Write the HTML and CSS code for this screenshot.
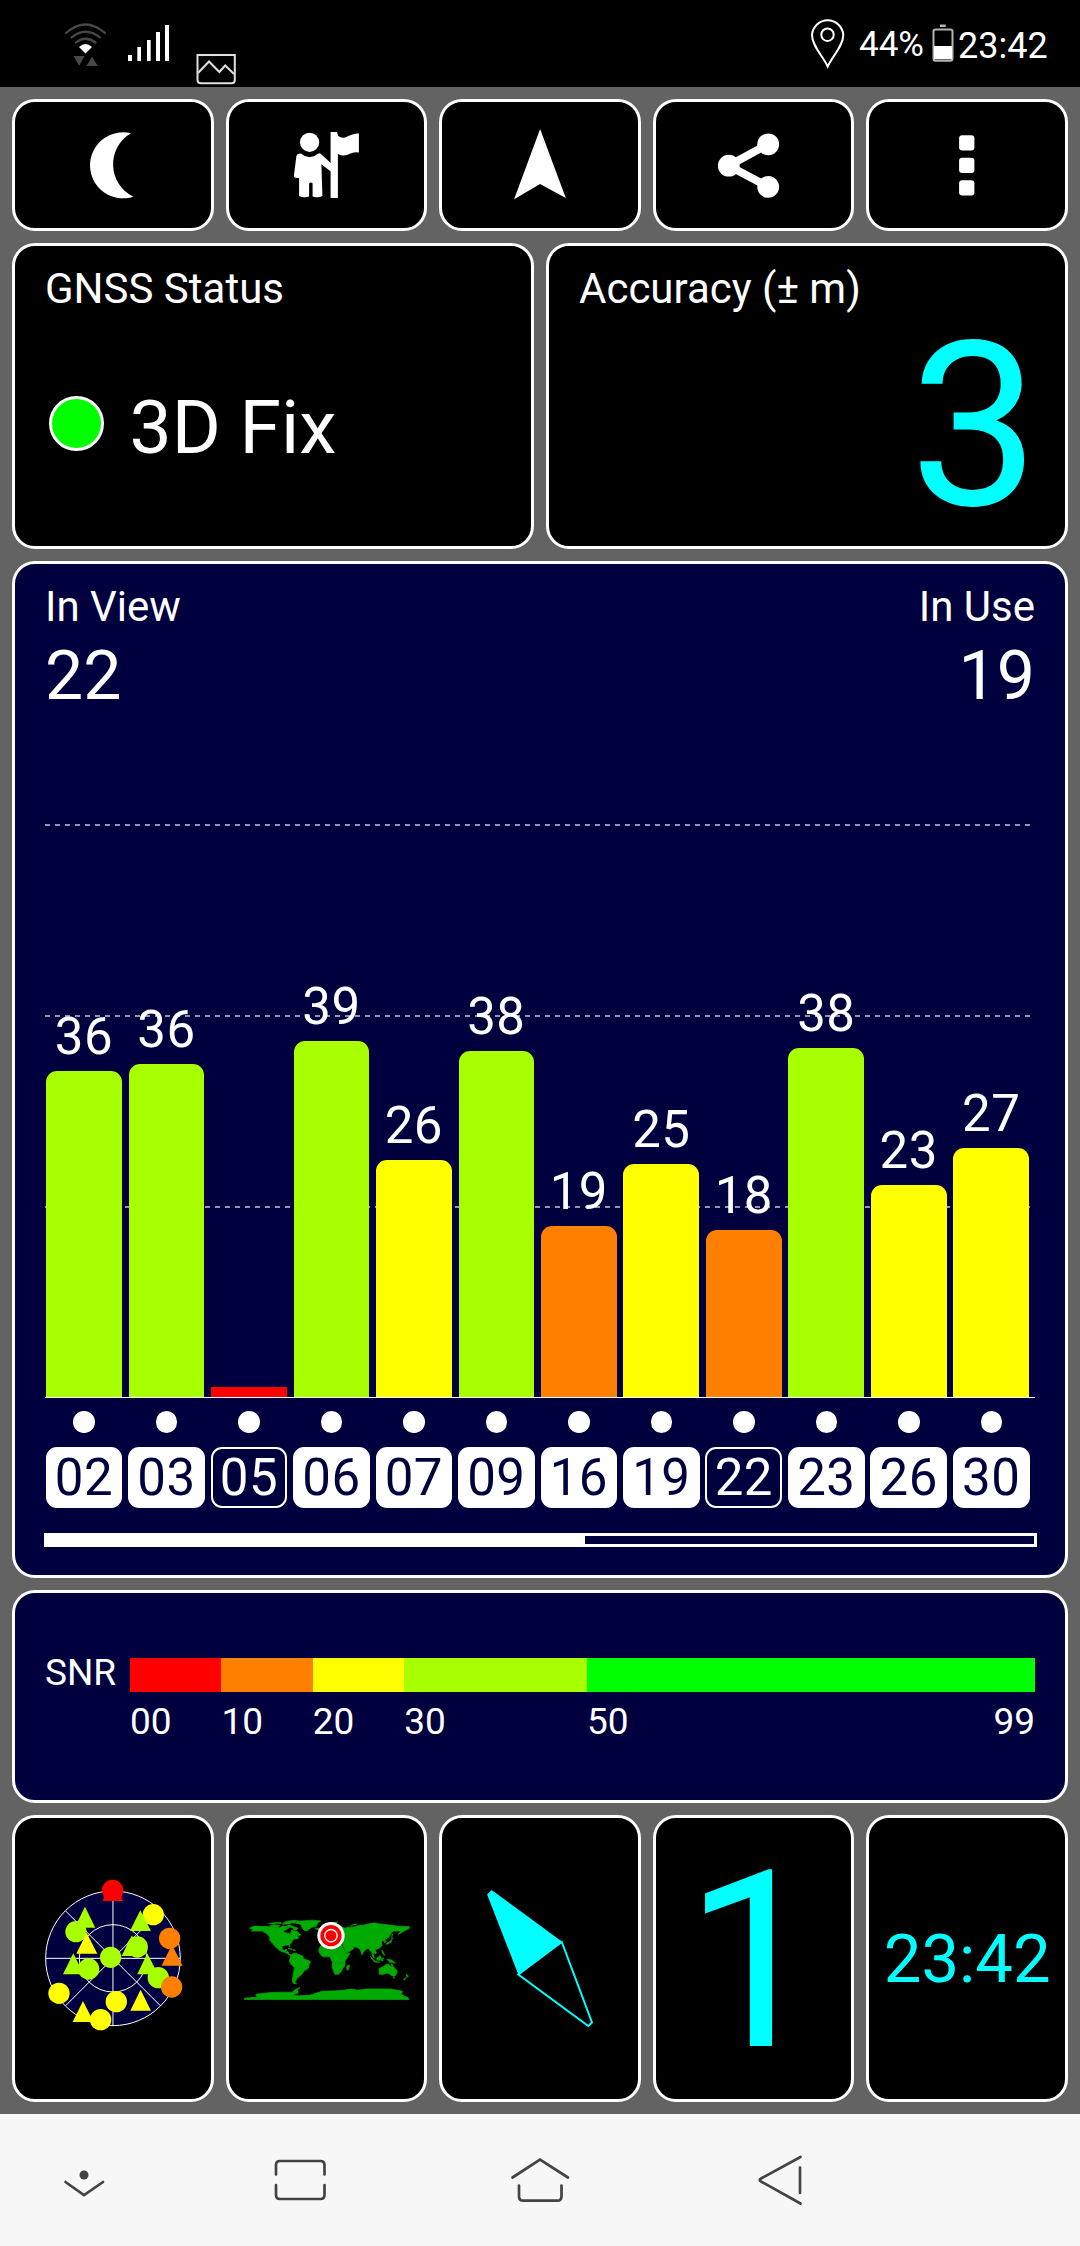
FILE: index.html
```html
<!doctype html>
<html lang="en">
<head>
<title>GPS Test</title>
<meta charset="utf-8">
<meta name="viewport" content="width=device-width">
<link rel="stylesheet" href="styles.css">
</head>
<body>
<div class="status">
	<svg class="wifi" viewBox="60 0 50 87">
		<g fill="none" stroke="#484848" stroke-width="2.2" stroke-linecap="round">
			<path d="M66 33Q85.5 16 105 33"/>
			<path d="M71.5 37.5Q85.5 26 100 37.5"/>
			<path d="M76 42.5Q85.5 35 95.5 42.5"/>
		</g>
		<path d="M79 47Q85.500 41 92 47L85.500 53.500z" fill="#fff"/>
		<path d="M73.500 56H84.500L79.200 65.700zM86.500 66H97.800L92 56.700z" fill="#484848"/>
	</svg>
	<svg class="signal" viewBox="125 0 50 87" fill="#fff">
		<path d="M128 55h4v6h-4zM137.300 47h3.700v14h-3.700zM147 40h3.700v21h-3.700zM156 32h4v29h-4zM165 25h4v36h-4z"/>
	</svg>
	<svg class="picture" viewBox="190 0 50 87" fill="none" stroke="#e0e0e0" stroke-width="2">
		<path d="M197.500 55H234.800V80Q234.800 83.200 231.500 83.200H201Q197.500 83.200 197.500 80z"/>
		<path d="M198 73L209 61.500L219.400 72L225.200 65.500L234 74"/>
	</svg>
	<svg class="pin" viewBox="805 0 45 87" fill="none" stroke="#fff" stroke-width="2">
		<path d="M827.700 66.500C823 56 812 46 812 35A15.700 16 0 0 1 843.300 35C843.300 46 832.500 56 827.700 66.500z"/>
		<circle cx="827.500" cy="34.700" r="6.200"/>
	</svg>
	<span class="percent">44%</span>
	<svg class="battery" viewBox="930 0 26 87">
		<rect x="933.500" y="29.500" width="19" height="31.200" rx="2" fill="none" stroke="#b4b4b4" stroke-width="2"/>
		<path d="M940 24.500h5.700v2.500h-5.700z" fill="#b4b4b4"/>
		<path d="M934 46h18v13.300h-18z" fill="#fff"/>
	</svg>
	<span class="clock">23:42</span>
</div>

<div class="app">
	<div class="row buttons">
		<div class="tile">
			<svg viewBox="15 102 195.6 126" fill="#fff"><path d="M130.900 133.300A33 33 0 1 0 133.300 196.700A36 36 0 0 1 130.900 133.300z"/></svg>
		</div>
		<div class="tile">
			<svg viewBox="228.6 102 195.6 126" fill="#fff">
				<circle cx="309.200" cy="142.300" r="9.600"/>
				<path d="M301 153.700Q309 161 317.500 153.700Q319.500 152.500 321 154.500L330.700 163.300V171.700L321 164.300L322 196Q317 198.200 312.200 196.500V183.500Q310.500 181.500 308.700 183.500V196.500Q303 198.200 298.700 196V178Q294 178 293.400 176.500L296 156Q297 152.500 301 153.700z"/>
				<path d="M330.200 132h6.500l1 4q3.500 2.500 7 1.500q9-4.500 13.800-4v19q-5-1-9 1.200q-6 3.500-12 .3v44h-7.300z"/>
			</svg>
		</div>
		<div class="tile">
			<svg viewBox="442.2 102 195.6 126" fill="#fff"><path d="M540.300 129L566 198L540.300 184L514.300 199.300z"/></svg>
		</div>
		<div class="tile">
			<svg viewBox="655.8 102 195.6 126" fill="#fff">
				<path d="M768 144.300L728.400 165.700L768 186.700" fill="none" stroke="#fff" stroke-width="8"/>
				<circle cx="728.600" cy="165.700" r="10.900"/>
				<circle cx="768" cy="144.300" r="10.900"/>
				<circle cx="768" cy="186.900" r="10.900"/>
			</svg>
		</div>
		<div class="tile">
			<svg viewBox="869.4 102 195.6 126" fill="#fff">
				<rect x="959.500" y="135.300" width="15.300" height="15.300" rx="3"/>
				<rect x="959.500" y="157.800" width="15.300" height="15.300" rx="3"/>
				<rect x="959.500" y="180.200" width="15.300" height="15.300" rx="3"/>
			</svg>
		</div>
	</div>

	<div class="row fix">
		<div class="tile padded">
			<div class="label">GNSS Status</div>
			<div class="fixline"><i class="led"></i>3D Fix</div>
		</div>
		<div class="tile padded">
			<div class="label">Accuracy (± m)</div>
			<div class="accuracy">3</div>
		</div>
	</div>

	<div class="tile padded navy chart">
		<div class="counts">
			<div><div class="label">In View</div><div class="count">22</div></div>
			<div class="right"><div class="label">In Use</div><div class="count">19</div></div>
		</div>
		<div class="plot">
			<i class="line" style="bottom:571px"></i>
			<i class="line" style="bottom:380px"></i>
			<i class="line" style="bottom:189px"></i>
			<div class="sat"><b>36</b><i class="bar lime" style="height:326px"></i></div>
			<div class="sat"><b>36</b><i class="bar lime" style="height:333px"></i></div>
			<div class="sat"><i class="bar red" style="height:10.500px"></i></div>
			<div class="sat"><b>39</b><i class="bar lime" style="height:356px"></i></div>
			<div class="sat"><b>26</b><i class="bar yellow" style="height:237px"></i></div>
			<div class="sat"><b>38</b><i class="bar lime" style="height:346px"></i></div>
			<div class="sat"><b>19</b><i class="bar orange" style="height:171px"></i></div>
			<div class="sat"><b>25</b><i class="bar yellow" style="height:233px"></i></div>
			<div class="sat"><b>18</b><i class="bar orange" style="height:167px"></i></div>
			<div class="sat"><b>38</b><i class="bar lime" style="height:349px"></i></div>
			<div class="sat"><b>23</b><i class="bar yellow" style="height:212px"></i></div>
			<div class="sat"><b>27</b><i class="bar yellow" style="height:249px"></i></div>
		</div>
		<div class="ids">
			<div class="id">02</div>
			<div class="id">03</div>
			<div class="id unused">05</div>
			<div class="id">06</div>
			<div class="id">07</div>
			<div class="id">09</div>
			<div class="id">16</div>
			<div class="id">19</div>
			<div class="id unused">22</div>
			<div class="id">23</div>
			<div class="id">26</div>
			<div class="id">30</div>
		</div>
		<div class="progress"><i></i></div>
	</div>

	<div class="tile navy snr">
		<span class="snrlabel">SNR</span>
		<div class="scale">
			<div class="red"></div>
			<div class="orange"></div>
			<div class="yellow"></div>
			<div class="lime"></div>
			<div class="green"></div>
			<span>00</span>
			<span>10</span>
			<span>20</span>
			<span>30</span>
			<span class="ends"><span>50</span><span>99</span></span>
		</div>
	</div>

	<div class="row bottom">
		<div class="tile">
			<!-- sky view -->
			<svg viewBox="45 54 587 843">
				<circle cx="339" cy="475" r="202" fill="#00003f"/>
				<g fill="none" stroke="#fff" stroke-width="3">
					<circle cx="339" cy="475" r="202"/>
					<circle cx="339" cy="475" r="101"/>
					<path d="M339 273V677M137 475H541M196 332L482 618M196 618L482 332"/>
				</g>
				<g fill="#ff0"><circle cx="460" cy="344" r="32"/></g>
				<g fill="#a8ff00">
					<path d="M255 320L286 383H224zM421 331L453 393H390zM396 406L428 468H365zM220 460L251 523H189zM442 460L474 523H412z"/>
					<circle cx="228" cy="395" r="32"/>
					<circle cx="412" cy="441" r="32"/>
					<circle cx="332" cy="472" r="32"/>
					<circle cx="266" cy="507" r="32"/>
					<circle cx="475" cy="533" r="32"/>
				</g>
				<g fill="#ff8000">
					<path d="M516 434L548 497H485z"/>
					<circle cx="509" cy="415" r="32"/>
					<circle cx="515" cy="561" r="32"/>
				</g>
				<g fill="#ff0">
					<path d="M260 398L292 461H229zM249 603L281 666H218zM422 569L453 632H391z"/>
					<circle cx="177" cy="580" r="32"/>
					<circle cx="349" cy="605" r="32"/>
					<circle cx="302" cy="659" r="32"/>
				</g>
				<g fill="red">
					<path d="M338 241L370 303H307z"/>
					<circle cx="338" cy="271" r="32"/>
				</g>
			</svg>
		</div>
		<div class="tile">
			<svg viewBox="56 54 587 843">
				<!-- points are longitude, latitude -->
				<g transform="translate(349 476) scale(1.378 -1.378)" fill="#0a0" stroke="#0a0" stroke-width="1.600">
					<path d="M-166 68L-156 71L-141 70L-128 70L-115 68L-108 68L-100 68L-95 72L-90 69L-86 68L-82 69L-82 67L-87 64L-94 60L-92 57L-82 55L-80 51L-78 56L-77 62L-70 60L-65 60L-60 55L-56 52L-60 50L-66 50L-60 46L-65 43L-70 43L-74 40L-76 35L-81 31L-80 26L-82 28L-84 30L-90 29L-97 27L-97 21L-92 18L-88 21L-88 16L-83 14L-83 10L-79 9L-77 8L-79 7L-86 11L-92 14L-97 15L-105 20L-109 26L-114 31L-109 23L-112 26L-117 33L-124 40L-124 47L-130 54L-140 60L-150 60L-158 60L-164 60L-160 64L-168 66z"/>
					<path d="M-124 71L-117 69L-105 69L-102 72L-115 74zM-90 70L-80 73L-72 70L-62 66L-67 62L-72 63L-73 67L-86 70zM-96 75L-80 76L-75 79L-62 82L-70 83.500L-88 81L-94 78zM-125 76L-110 77L-98 77L-100 79L-118 78z"/>
					<path d="M-73 78L-58 82L-30 83.600L-13 82L-20 77L-22 71L-33 68L-42 61L-48 61L-53 67L-55 72L-60 76z"/>
					<path d="M-24 66L-14 66L-14 64L-22 63.500zM-84 22L-75 20L-78 22zM-73 20L-68 18L-73 18z"/>
					<path d="M-78 8L-72 12L-62 10L-52 5L-50 0L-42 -3L-35 -6L-38 -13L-40 -21L-48 -26L-54 -34L-58 -38L-63 -41L-67 -47L-69 -52L-65 -55L-72 -54L-75 -48L-73 -37L-70 -19L-76 -14L-81 -6L-80 0z"/>
					<path d="M-17 15L-16 23L-9 32L-6 36L10 37L12 33L20 31L32 31L36 23L43 11L51 12L45 2L40 -5L40 -15L35 -21L32 -28L26 -34L18 -34L12 -18L13 -8L9 0L8 4L-8 4L-13 9zM44 -16L50 -14L47 -25L44 -24z"/>
					<path d="M-9 43L-9 37L-5 36L3 42L10 44L16 38L18 41L12 46L20 41L24 37L28 41L36 37L35 31L43 13L52 17L60 23L56 26L50 28L57 26L66 25L73 20L77 8L80 14L88 22L92 22L95 16L98 16L100 5L104 1L101 12L108 11L106 20L114 22L121 29L119 37L125 40L127 34L129 38L127 42L135 46L140 54L145 60L155 60L162 61L156 52L163 57L170 61L180 66L180 70L160 70L140 73L112 76L104 78L88 75L80 73L70 72L60 69L45 68L40 66L32 70L24 71L14 67L5 62L8 58L12 57L17 62L22 65L20 60L28 60L20 54L10 54L4 52L-4 48z"/>
					<path d="M-6 50L1 52L-2 55L-5 58L-6 55zM-10 52L-6 54L-9 55zM11 78L24 80L17 77zM52 71L66 76L58 74zM130 31L141 36L142 42L138 37L131 34zM142 46L143 54zM141 43L145 44z"/>
					<path d="M95 5L105 -5L115 -8L104 -7zM109 1L117 7L119 1L115 -4L110 -3zM119 1L125 1L121 -1L123 -5L119 -4zM120 18L122 17L125 11L126 7L122 12zM131 -1L138 -2L146 -6L150 -10L143 -8L138 -8z"/>
					<path d="M114 -22L122 -18L130 -12L136 -12L136 -15L141 -17L142 -11L146 -18L153 -26L153 -32L149 -38L143 -38L138 -34L131 -31L124 -34L115 -34zM145 -41L148 -41L147 -43zM173 -34L178 -38L175 -41zM172 -41L170 -46L167 -46z"/>
					<path d="M-179 -86L-150 -84L-155 -79L-150 -77L-125 -74L-100 -73L-75 -73L-68 -67L-58 -63L-63 -68L-62 -75L-75 -79L-60 -81L-35 -79L-10 -71L20 -70L35 -69L55 -66L68 -69L85 -66L110 -66L140 -66L165 -71L163 -78L179 -86V-89H-179z"/>
				</g>
				<circle cx="362" cy="407" r="41" fill="#fff"/>
				<circle cx="362" cy="407" r="32" fill="red"/>
				<circle cx="362" cy="407" r="18.500" fill="red" stroke="#fff" stroke-width="4"/>
			</svg>
		</div>
		<div class="tile">
			<svg viewBox="442.2 1818 195.6 281">
				<path d="M487.300 1894.500L491.800 1890L562 1941.500L518.500 1974.500z" fill="#0ff"/>
				<path d="M562 1942L592.200 2022.500L588.500 2026L518.500 1974.500z" fill="none" stroke="#0ff" stroke-width="2"/>
			</svg>
		</div>
		<div class="tile center"><span class="heading">1</span></div>
		<div class="tile center"><span class="time">23:42</span></div>
	</div>
</div>

<svg class="nav" viewBox="0 2114 1080 132" fill="none" stroke="#444" stroke-width="2.700" stroke-linecap="round">
	<circle cx="84" cy="2175" r="4.500" fill="#444" stroke="none"/>
	<path d="M65.500 2182L84 2195L103 2182"/>
	<path d="M276 2174.500V2165Q276 2161 280 2161H320.500Q324.500 2161 324.500 2165V2174.500M276 2185V2195Q276 2199 280 2199H320.500Q324.500 2199 324.500 2195V2185"/>
	<path d="M512.500 2177.500L540 2159.500L568 2177.500M519 2185.500V2196Q519 2200.700 523 2200.700H557.500Q561.500 2200.700 561.500 2196V2185.500"/>
	<path d="M800.500 2157L761 2178.500Q758.500 2180 761 2181.500L800.500 2203.500M800 2167.500V2193"/>
</svg>
</body>
</html>
```
FILE: styles.css
```css
body {
	margin:0;
	width:1080px;
	background-color:#636363;
	color:#fff;
	font-family:Roboto, sans-serif;
}
svg {
	display:block;
}

.status {
	display:flex;
	height:87px;
	background-color:#000;
}
.status svg {
	height:87px;
	flex:none;
}
.wifi { width:50px; margin-left:60px; }
.signal { width:50px; margin-left:15px; }
.picture { width:50px; margin-left:15px; }
.pin { width:45px; margin-left:565px; }
.percent {
	width:72px;
	margin-left:9px;
	font-size:35px;
	line-height:90px;
}
.battery { width:26px; margin-left:-1px; }
.clock {
	margin-left:2px;
	font-size:36px;
	line-height:92px;
}

.app {
	display:flex;
	flex-direction:column;
	gap:12px;
	box-sizing:border-box;
	height:2027px;
	padding:12px;
}
.row {
	display:flex;
	gap:12px;
}
.tile {
	box-sizing:border-box;
	border:3px solid #fff;
	border-radius:23px;
	background-color:#000;
}
.row .tile {
	flex:1 1 0;
	min-width:0;
}
.tile svg {
	width:100%;
	height:100%;
}
.padded {
	padding:19px 30px 0;
}
.navy {
	background-color:#00003f;
}
.buttons { height:132px; }
.fix { height:306px; }
.chart { height:1017px; }
.snr { height:213px; }
.bottom { height:287px; }

.label {
	font-size:42px;
	line-height:48px;
}
.fixline {
	display:flex;
	align-items:center;
	margin-top:74px;
	font-size:75px;
	line-height:80px;
}
.led {
	box-sizing:border-box;
	width:55px;
	height:55px;
	margin:-7px 26px 0 3.500px;
	border:3px solid #fff;
	border-radius:50%;
	background-color:#0f0;
}
.accuracy {
	margin:-6px -4px 0 0;
	font-size:230px;
	line-height:240px;
	text-align:right;
	color:#0ff;
}

.counts {
	display:flex;
	justify-content:space-between;
	height:133px;
}
.right {
	text-align:right;
}
.count {
	margin-top:5px;
	font-size:68px;
	line-height:80px;
}
.plot {
	position:relative;
	display:flex;
	align-items:flex-end;
	gap:5.8px;
	height:681px;
	padding-left:.6px;
	border-bottom:1px solid #fff;
}
.line {
	position:absolute;
	left:0;
	width:986px;
	height:2px;
	background:repeating-linear-gradient(90deg, #9494ac 0 5px, transparent 5px 10px);
}
.sat {
	position:relative;
	width:76.7px;
	text-align:center;
}
.sat b {
	display:block;
	margin-bottom:9px;
	font-size:51px;
	font-weight:400;
	line-height:50px;
	letter-spacing:.5px;
}
.bar {
	display:block;
	margin:0 .5px;
	border-radius:11px 11px 0 0;
}
.red { background-color:#f00; }
.orange { background-color:#ff8000; }
.yellow { background-color:#ff0; }
.lime { background-color:#a8ff00; }
.green { background-color:#0f0; }
.bar.red { border-radius:0; }

.ids {
	display:flex;
	gap:5.8px;
	padding:49px 0 0 .6px;
}
.id {
	position:relative;
	box-sizing:border-box;
	width:76.7px;
	height:61px;
	border:2px solid #fff;
	border-radius:11px;
	background-color:#fff;
	color:#00003f;
	font-size:51px;
	line-height:58px;
	letter-spacing:.5px;
	text-align:center;
}
.unused {
	background-color:transparent;
	color:#fff;
}
.id:before {
	content:"";
	position:absolute;
	left:25.700px;
	top:-38px;
	width:21.500px;
	height:21.500px;
	border-radius:50%;
	background-color:#fff;
}
.progress {
	box-sizing:border-box;
	width:993px;
	height:14px;
	margin:25px 0 0 -1px;
	border:3px solid #fff;
}
.progress i {
	display:block;
	width:54.500%;
	height:100%;
	background-color:#fff;
}

.snr {
	display:flex;
	padding:65px 30px 0;
	font-size:37px;
}
.snrlabel {
	width:85px;
	line-height:29px;
}
.scale {
	display:grid;
	grid-template-columns:91.4px 91.4px 91.4px 182.8px 1fr;
	grid-template-rows:34px 60px;
	width:905px;
}
.scale span {
	line-height:59px;
}
.ends {
	display:flex;
	justify-content:space-between;
}

.center {
	display:flex;
	align-items:center;
	justify-content:center;
	color:#0ff;
}
.heading {
	padding-top:8px;
	font-size:246px;
	line-height:281px;
}
.time {
	font-size:67px;
	line-height:80px;
}
.nav {
	width:1080px;
	height:132px;
	background-color:#f7f7f7;
}
```
